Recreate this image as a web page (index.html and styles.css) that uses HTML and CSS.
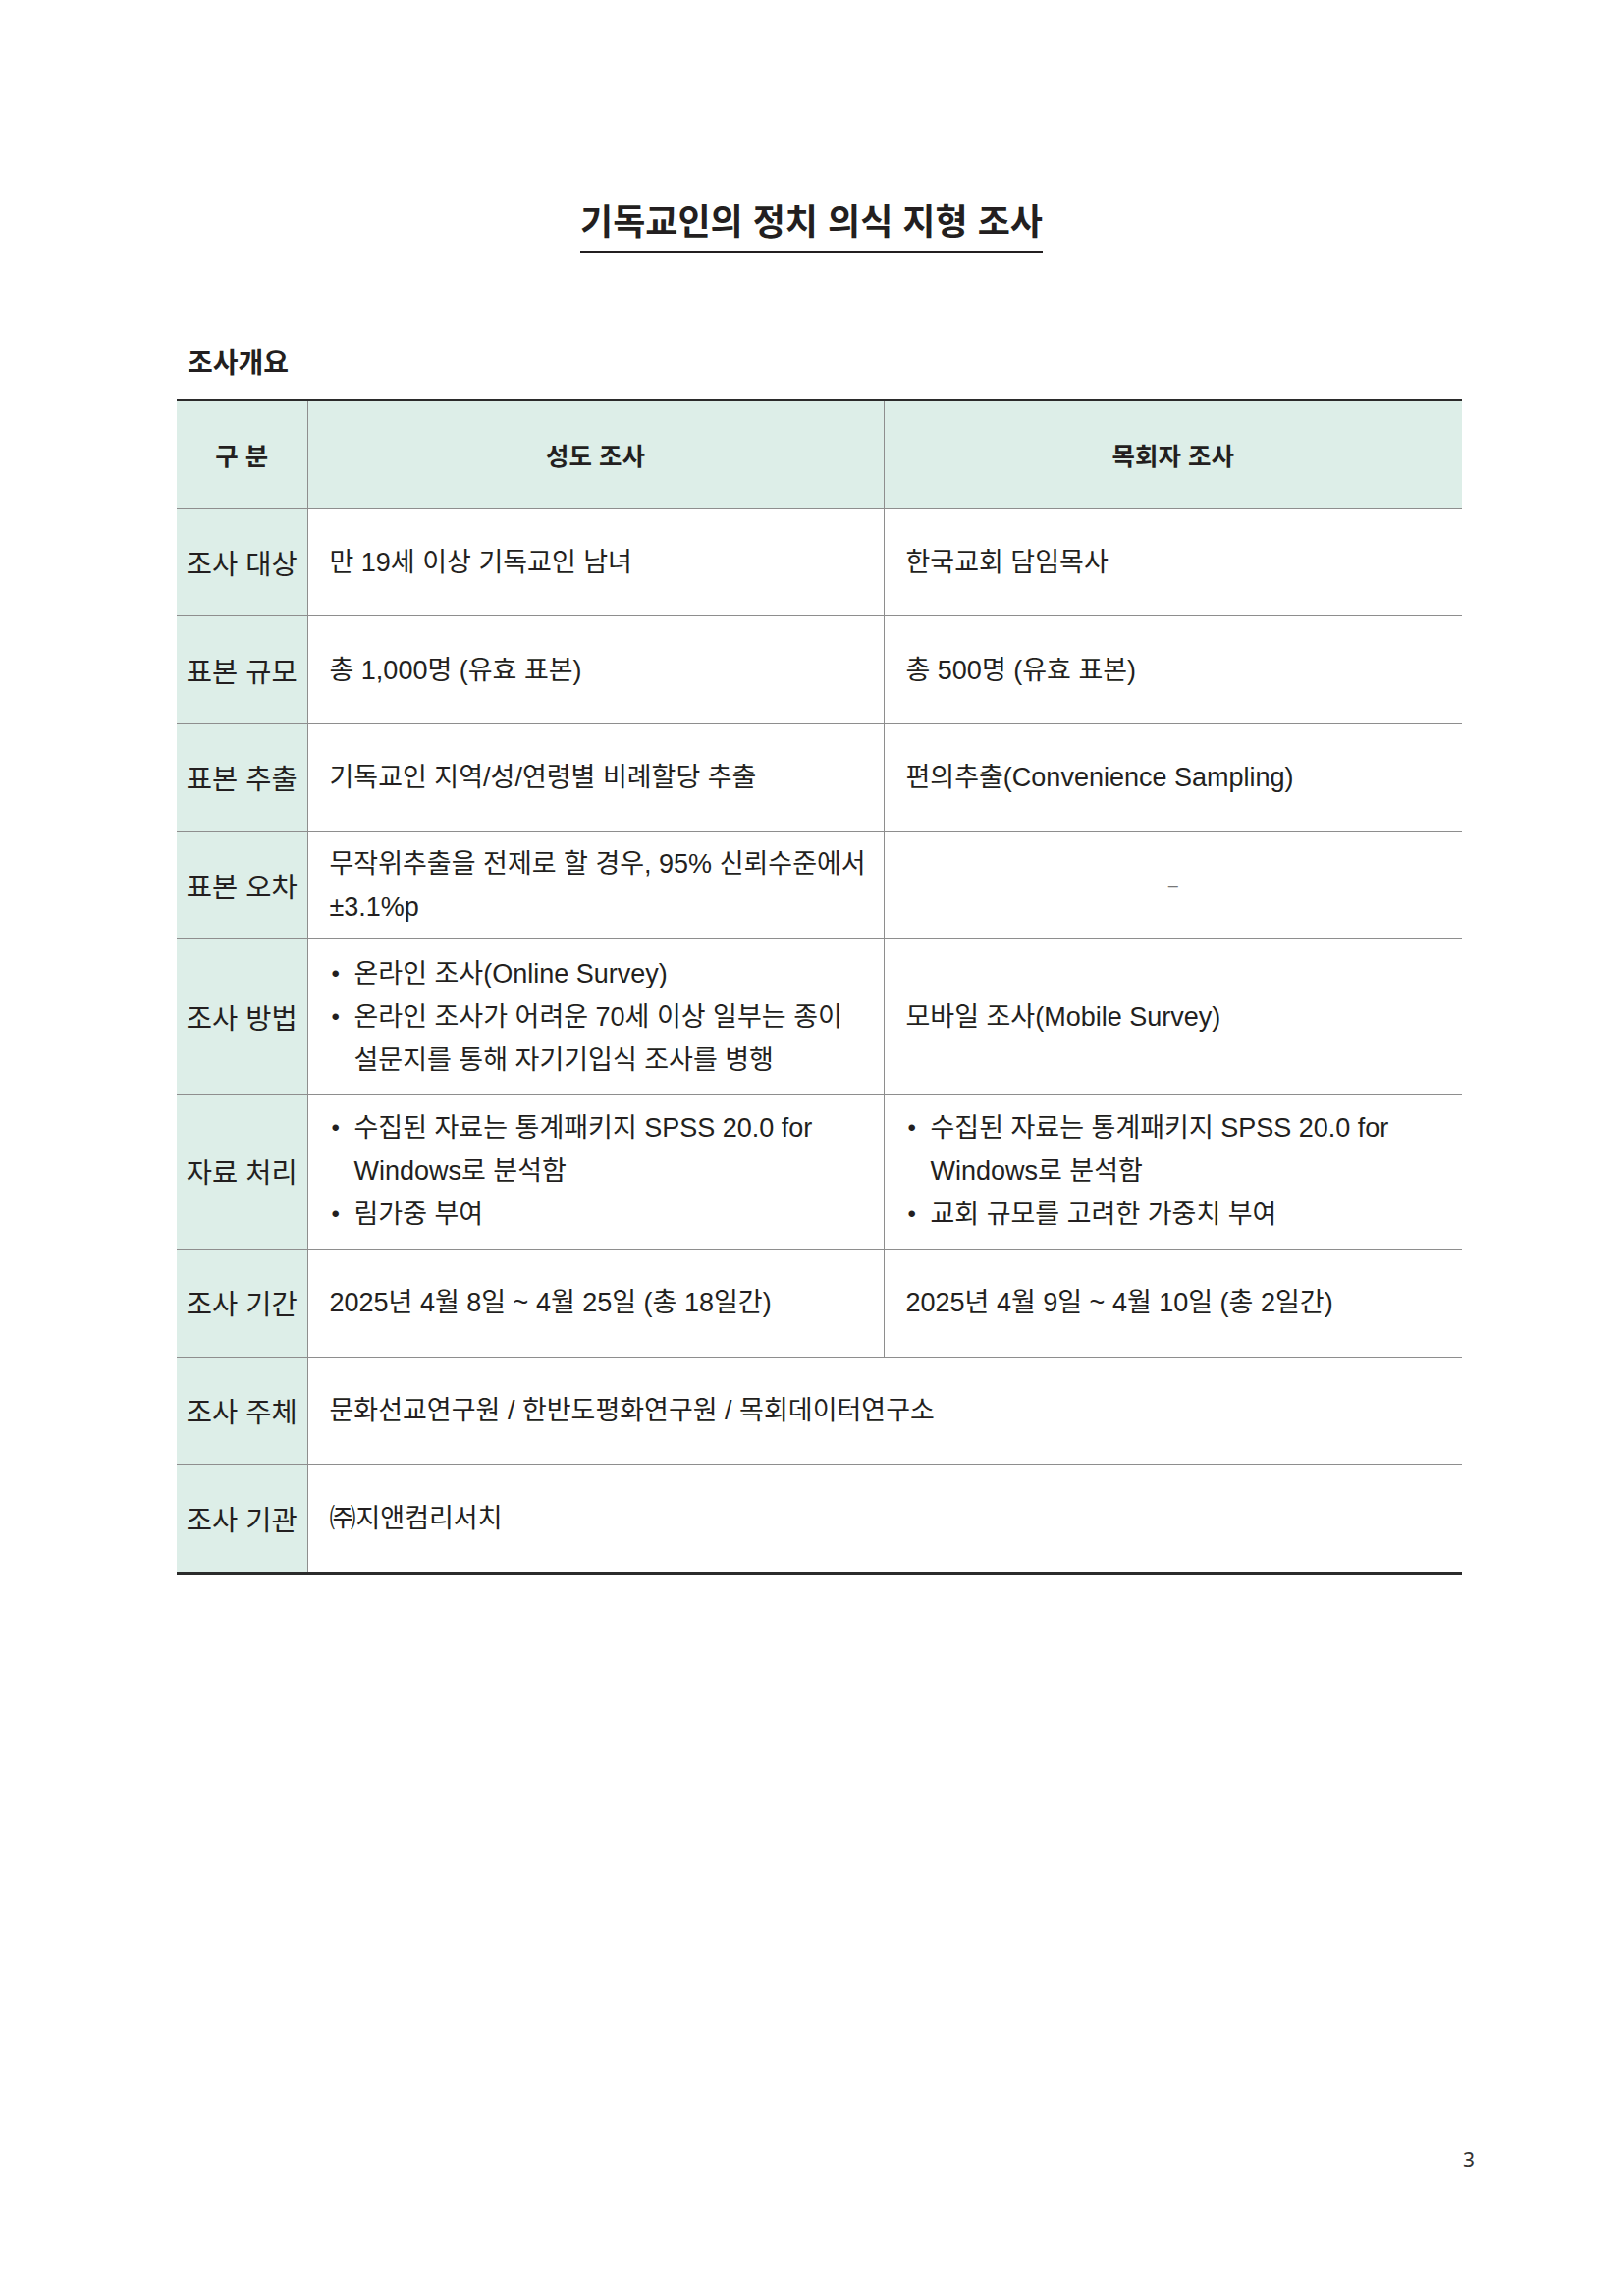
FILE: index.html
```html
<!DOCTYPE html>
<html lang="ko">
<head>
<meta charset="utf-8">
<title>기독교인의 정치 의식 지형 조사</title>
<link rel="stylesheet" href="styles.css">
</head>
<body>
<div class="page">
  <div class="title-wrap"><h1 class="title">기독교인의 정치 의식 지형 조사</h1></div>
  <h2 class="section">조사개요</h2>
  <table class="survey">
    <colgroup><col class="c1"><col class="c2"><col class="c3"></colgroup>
    <thead>
      <tr class="head">
        <th class="lbl">구 분</th>
        <th>성도 조사</th>
        <th>목회자 조사</th>
      </tr>
    </thead>
    <tbody>
      <tr class="row">
        <td class="lbl">조사 대상</td>
        <td>만 19세 이상 기독교인 남녀</td>
        <td>한국교회 담임목사</td>
      </tr>
      <tr class="row">
        <td class="lbl">표본 규모</td>
        <td>총 1,000명 (유효 표본)</td>
        <td>총 500명 (유효 표본)</td>
      </tr>
      <tr class="row">
        <td class="lbl">표본 추출</td>
        <td>기독교인 지역/성/연령별 비례할당 추출</td>
        <td>편의추출(Convenience Sampling)</td>
      </tr>
      <tr class="row">
        <td class="lbl">표본 오차</td>
        <td class="multi">무작위추출을 전제로 할 경우, 95% 신뢰수준에서<br>±3.1%p</td>
        <td class="dash">–</td>
      </tr>
      <tr class="row tall">
        <td class="lbl">조사 방법</td>
        <td class="multi">
          <ul class="bullets">
            <li><span class="dot">•</span><span>온라인 조사(Online Survey)</span></li>
            <li><span class="dot">•</span><span>온라인 조사가 어려운 70세 이상 일부는 종이<br>설문지를 통해 자기기입식 조사를 병행</span></li>
          </ul>
        </td>
        <td>모바일 조사(Mobile Survey)</td>
      </tr>
      <tr class="row tall">
        <td class="lbl">자료 처리</td>
        <td class="multi">
          <ul class="bullets">
            <li><span class="dot">•</span><span>수집된 자료는 통계패키지 SPSS 20.0 for<br>Windows로 분석함</span></li>
            <li><span class="dot">•</span><span>림가중 부여</span></li>
          </ul>
        </td>
        <td class="multi">
          <ul class="bullets">
            <li><span class="dot">•</span><span>수집된 자료는 통계패키지 SPSS 20.0 for<br>Windows로 분석함</span></li>
            <li><span class="dot">•</span><span>교회 규모를 고려한 가중치 부여</span></li>
          </ul>
        </td>
      </tr>
      <tr class="row">
        <td class="lbl">조사 기간</td>
        <td>2025년 4월 8일 ~ 4월 25일 (총 18일간)</td>
        <td>2025년 4월 9일 ~ 4월 10일 (총 2일간)</td>
      </tr>
      <tr class="row">
        <td class="lbl">조사 주체</td>
        <td colspan="2">문화선교연구원 / 한반도평화연구원 / 목회데이터연구소</td>
      </tr>
      <tr class="row">
        <td class="lbl">조사 기관</td>
        <td colspan="2">㈜지앤컴리서치</td>
      </tr>
    </tbody>
  </table>
  <div class="footer"><span class="pageno">3</span></div>
</div>
</body>
</html>
```

FILE: styles.css
```css
html, body {
  margin: 0;
  padding: 0;
  background: #ffffff;
}

body {
  font-family: "Liberation Sans", "Noto Sans CJK KR", sans-serif;
  color: #231f20;
}

.page {
  width: 1653px;
  height: 2339px;
  box-sizing: border-box;
  padding-top: 201px;
  display: flex;
  flex-direction: column;
}

.title-wrap {
  text-align: center;
}

.title {
  display: inline-block;
  margin: 0;
  padding: 0 0 11px;
  font-family: "Noto Sans CJK KR", sans-serif;
  font-weight: 700;
  font-size: 36px;
  line-height: 44px;
  border-bottom: 2px solid #231f20;
}

.section {
  margin: 93px 0 0 191px;
  font-family: "Noto Sans CJK KR", sans-serif;
  font-weight: 700;
  font-size: 28px;
  line-height: 34px;
}

.survey {
  margin: 21px 0 0 180px;
  width: 1309px;
  border-collapse: collapse;
  table-layout: fixed;
  border-top: 3px solid #2b2b2b;
  border-bottom: 3px solid #2b2b2b;
}

.c1 { width: 133px; }
.c2 { width: 587px; }
.c3 { width: 589px; }

.survey th,
.survey td {
  border: 1px solid #8e8e8e;
  padding: 0 22px;
  font-size: 27px;
  line-height: 44px;
  text-align: left;
  vertical-align: middle;
  white-space: nowrap;
}

.survey tr > :first-child { border-left: none; }
.survey tr > :last-child { border-right: none; }

.survey th {
  background: #ddeee8;
  font-family: "Noto Sans CJK KR", sans-serif;
  font-weight: 700;
  font-size: 25.5px;
  text-align: center;
}

.head th { height: 108.7px; }
.row td { height: 108.7px; }
.row.tall td { height: 156.7px; }

.survey .lbl {
  background: #ddeee8;
  padding: 0;
  text-align: center;
  font-family: "Noto Sans CJK KR", sans-serif;
  font-size: 28.5px;
}

.survey th.lbl {
  font-size: 25.5px;
}

.survey td.dash {
  text-align: center;
  color: #777;
  font-size: 18px;
}

.bullets {
  list-style: none;
  margin: 0;
  padding: 0;
}

.bullets li {
  display: flex;
}

.dot {
  width: 25px;
  flex: none;
  padding-left: 2px;
  box-sizing: border-box;
  font-size: 24px;
}

.footer {
  margin-top: auto;
  padding: 0 151px 126px 0;
  text-align: right;
}

.pageno {
  font-family: "Noto Sans", sans-serif;
  font-size: 21px;
  line-height: 26px;
  color: #333;
}
```
